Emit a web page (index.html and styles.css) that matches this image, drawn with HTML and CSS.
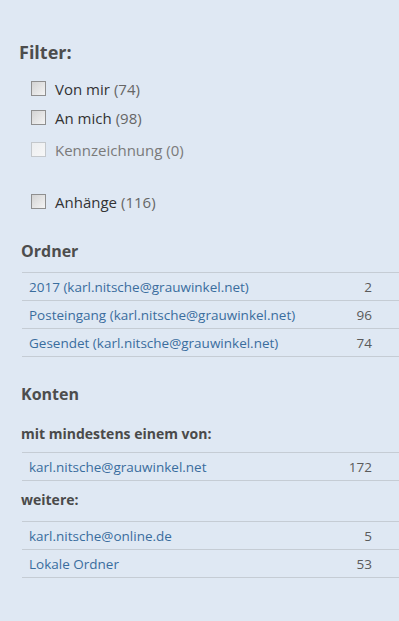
FILE: index.html
```html
<!DOCTYPE html>
<html lang="de">
<head>
  <meta charset="UTF-8">
  <title>Filter</title>
  <link rel="stylesheet" href="styles.css">
</head>
<body>
  <div class="panel">
    <h2 class="filter-title">Filter:</h2>

    <ul class="filters">
      <li><span class="box"></span>Von mir <span class="num">(74)</span></li>
      <li><span class="box"></span>An mich <span class="num">(98)</span></li>
      <li class="disabled"><span class="box"></span>Kennzeichnung (0)</li>
      <li class="gap"><span class="box"></span>Anhänge <span class="num">(116)</span></li>
    </ul>

    <h3 class="section-title">Ordner</h3>
    <ul class="rows">
      <li><a href="#">2017 (karl.nitsche@grauwinkel.net)</a><span class="count">2</span></li>
      <li><a href="#">Posteingang (karl.nitsche@grauwinkel.net)</a><span class="count">96</span></li>
      <li><a href="#">Gesendet (karl.nitsche@grauwinkel.net)</a><span class="count">74</span></li>
    </ul>

    <h3 class="section-title konten">Konten</h3>
    <h4 class="sub-title">mit mindestens einem von:</h4>
    <ul class="rows">
      <li><a href="#">karl.nitsche@grauwinkel.net</a><span class="count">172</span></li>
    </ul>
    <h4 class="sub-title weitere">weitere:</h4>
    <ul class="rows">
      <li><a href="#">karl.nitsche@online.de</a><span class="count">5</span></li>
      <li><a href="#">Lokale Ordner</a><span class="count">53</span></li>
    </ul>
  </div>
</body>
</html>
```

FILE: styles.css
```css
body {
  margin: 0;
  background: #dfe8f3;
  font-family: "Open Sans", sans-serif;
  color: #4a4a4a;
}

.panel {
  padding: 40px 0 30px 19px;
}

.filter-title {
  margin: 0 0 10px 0;
  font-size: 18px;
  line-height: 24px;
  font-weight: bold;
  color: #4d4d4d;
}

.filters {
  list-style: none;
  margin: 0 0 25px 12px;
  padding: 0;
}

.filters li {
  display: flex;
  align-items: center;
  height: 29px;
  font-size: 15px;
  color: #333;
}

.filters li.disabled {
  color: #7a7a7a;
  margin-top: 3px;
}

.filters li.gap {
  margin-top: 23px;
}

.filters .num {
  color: #666;
  margin-left: 4px;
}

/* kleines graues Kästchen statt echter Checkbox */
.box {
  width: 13px;
  height: 13px;
  border: 1px solid #8f8f8f;
  background: linear-gradient(135deg, #d3d3d3, #f4f4f4);
  margin-right: 9px;
  flex: none;
}

.disabled .box {
  border-color: #c4c8cc;
  background: linear-gradient(135deg, #eceef0, #f7f7f7);
}

.section-title {
  margin: 0 0 11px 2px;
  font-size: 16px;
  line-height: 20px;
  font-weight: bold;
  color: #4d4d4d;
}

.section-title.konten {
  margin-top: 27px;
  margin-bottom: 21px;
}

.sub-title {
  margin: 0 0 9px 2px;
  font-size: 14px;
  line-height: 18px;
  font-weight: bold;
  color: #4a4a4a;
}

.sub-title.weitere {
  margin-top: 10px;
  margin-bottom: 12px;
}

.rows {
  list-style: none;
  margin: 0 0 0 3px;
  padding: 0;
  border-top: 1px solid #c5ccd4;
}

.rows li {
  display: flex;
  justify-content: space-between;
  align-items: center;
  height: 27px;
  padding: 0 27px 0 7px;
  border-bottom: 1px solid #c5ccd4;
  font-size: 13.5px;
}

.rows a {
  color: #3a6d9e;
  text-decoration: none;
}

.rows .count {
  color: #5a5a5a;
}
```
